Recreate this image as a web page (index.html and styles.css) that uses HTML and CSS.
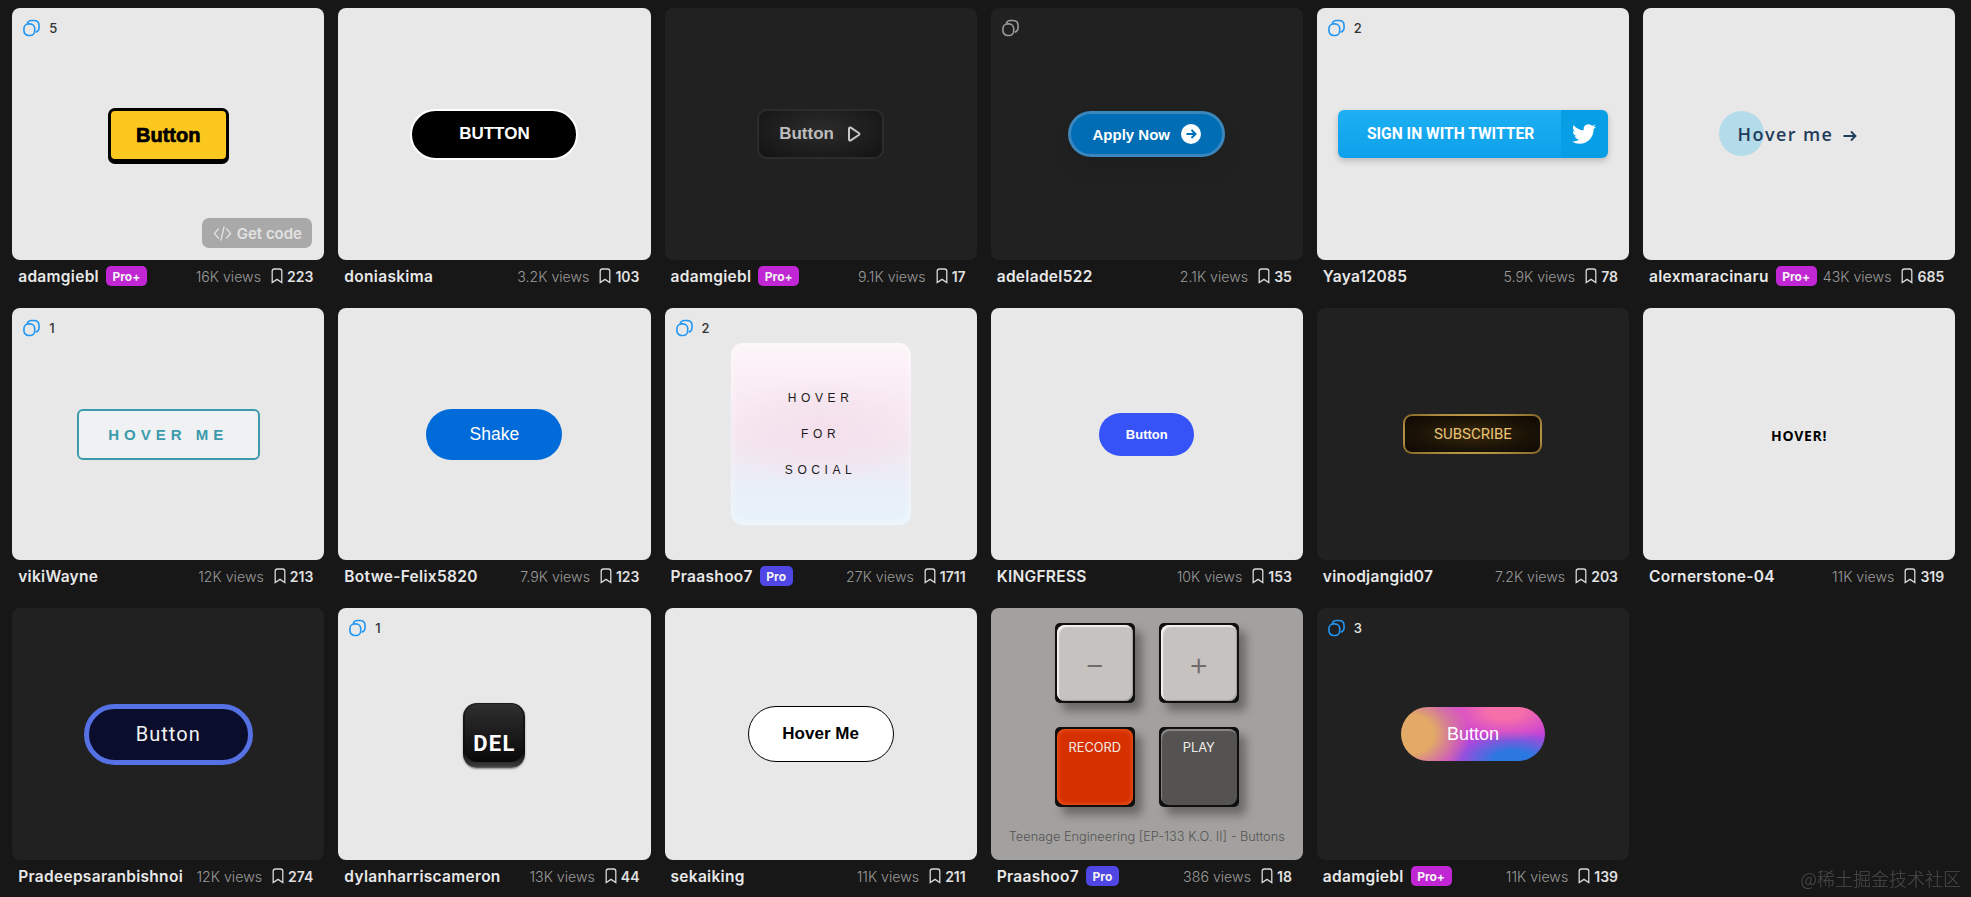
FILE: index.html
```html
<!DOCTYPE html>
<html lang="en">
  <head>
    <title>Buttons</title>
    <meta charset="UTF-8">
    <link rel="stylesheet" href="styles.css">
  </head>
  <body>
    <svg class="defs" aria-hidden="true">
      <symbol id="stack" viewBox="0 0 18 18">
        <rect x="1" y="4.6" width="11.4" height="12.4" rx="5" />
        <path d="M4.4 4.2C5 2.4 6.6 1 9 1h2.4C14.6 1 17 3 17 6.4v2.4c0 2.2-1.4 4-3.6 4.6" />
      </symbol>
      <symbol id="bookmark" viewBox="0 0 12 16">
        <path d="M1.2 14.6V3.2C1.2 1.9 2.1 1 3.4 1h5.2c1.3 0 2.2.9 2.2 2.2v11.4L6 11.4z" />
      </symbol>
    </svg>

    <main class="grid">
      <!-- row 1 -->
      <article class="item">
        <div class="thumb light">
          <div class="variants"><svg class="stack"><use href="#stack" /></svg><span>5</span></div>
          <button class="btn-yellow">Button</button>
          <div class="get-code">
            <svg viewBox="0 0 20 18"><path d="M6 3.5L1.5 9 6 14.5M14 3.5L18.5 9 14 14.5M11.8 1.5L8.2 16.5" /></svg>
            Get code
          </div>
        </div>
        <div class="meta">
          <span class="author">adamgiebl</span><span class="badge plus">Pro+</span>
          <span class="views">16K views</span><svg class="mark"><use href="#bookmark" /></svg><span class="saves">223</span>
        </div>
      </article>

      <article class="item">
        <div class="thumb light"><button class="btn-black">BUTTON</button></div>
        <div class="meta">
          <span class="author">doniaskima</span>
          <span class="views">3.2K views</span><svg class="mark"><use href="#bookmark" /></svg><span class="saves">103</span>
        </div>
      </article>

      <article class="item">
        <div class="thumb dark">
          <button class="btn-glow">Button
            <svg viewBox="0 0 16 16"><path d="M3 2.6c0-1 1-1.5 1.8-1l8 5.4c.8.5.8 1.5 0 2l-8 5.4c-.8.5-1.8 0-1.8-1z" /></svg>
          </button>
        </div>
        <div class="meta">
          <span class="author">adamgiebl</span><span class="badge plus">Pro+</span>
          <span class="views">9.1K views</span><svg class="mark"><use href="#bookmark" /></svg><span class="saves">17</span>
        </div>
      </article>

      <article class="item">
        <div class="thumb dark">
          <div class="variants"><svg class="stack grey"><use href="#stack" /></svg></div>
          <button class="btn-apply">Apply Now
            <svg viewBox="0 0 20 20"><circle cx="10" cy="10" r="10" fill="#fff" /><path d="M5.5 10h8.5M10.5 6l4 4-4 4" fill="none" stroke="#0070b8" stroke-width="2" /></svg>
          </button>
        </div>
        <div class="meta">
          <span class="author">adeladel522</span>
          <span class="views">2.1K views</span><svg class="mark"><use href="#bookmark" /></svg><span class="saves">35</span>
        </div>
      </article>

      <article class="item">
        <div class="thumb light">
          <div class="variants"><svg class="stack"><use href="#stack" /></svg><span>2</span></div>
          <button class="btn-twitter">
            <span class="twitter-label">SIGN IN WITH TWITTER</span>
            <span class="twitter-icon">
              <svg viewBox="0 0 24 24"><path d="M23.953 4.57a10 10 0 01-2.825.775 4.958 4.958 0 002.163-2.723c-.951.555-2.005.959-3.127 1.184a4.92 4.92 0 00-8.384 4.482C7.69 8.095 4.067 6.13 1.64 3.162a4.822 4.822 0 00-.666 2.475c0 1.71.87 3.213 2.188 4.096a4.904 4.904 0 01-2.228-.616v.06a4.923 4.923 0 003.946 4.827 4.996 4.996 0 01-2.212.085 4.936 4.936 0 004.604 3.417 9.867 9.867 0 01-6.102 2.105c-.39 0-.779-.023-1.17-.067a13.995 13.995 0 007.557 2.209c9.053 0 13.998-7.496 13.998-13.985 0-.21 0-.42-.015-.63A9.935 9.935 0 0024 4.59z" /></svg>
            </span>
          </button>
        </div>
        <div class="meta">
          <span class="author">Yaya12085</span>
          <span class="views">5.9K views</span><svg class="mark"><use href="#bookmark" /></svg><span class="saves">78</span>
        </div>
      </article>

      <article class="item">
        <div class="thumb light">
          <button class="btn-circle">Hover me
            <svg viewBox="0 0 14 12"><path d="M.5 6h12M8 1.5L12.5 6 8 10.5" /></svg>
          </button>
        </div>
        <div class="meta">
          <span class="author">alexmaracinaru</span><span class="badge plus">Pro+</span>
          <span class="views tight">43K views</span><svg class="mark"><use href="#bookmark" /></svg><span class="saves">685</span>
        </div>
      </article>

      <!-- row 2 -->
      <article class="item">
        <div class="thumb light">
          <div class="variants"><svg class="stack"><use href="#stack" /></svg><span>1</span></div>
          <button class="btn-outline">HOVER ME</button>
        </div>
        <div class="meta">
          <span class="author">vikiWayne</span>
          <span class="views">12K views</span><svg class="mark"><use href="#bookmark" /></svg><span class="saves">213</span>
        </div>
      </article>

      <article class="item">
        <div class="thumb light"><button class="btn-shake">Shake</button></div>
        <div class="meta">
          <span class="author">Botwe-Felix5820</span>
          <span class="views">7.9K views</span><svg class="mark"><use href="#bookmark" /></svg><span class="saves">123</span>
        </div>
      </article>

      <article class="item">
        <div class="thumb light">
          <div class="variants"><svg class="stack"><use href="#stack" /></svg><span>2</span></div>
          <div class="social-card">
            <span>HOVER</span>
            <span>FOR</span>
            <span>SOCIAL</span>
          </div>
        </div>
        <div class="meta">
          <span class="author">Praashoo7</span><span class="badge pro">Pro</span>
          <span class="views">27K views</span><svg class="mark"><use href="#bookmark" /></svg><span class="saves">1711</span>
        </div>
      </article>

      <article class="item">
        <div class="thumb light"><button class="btn-royal">Button</button></div>
        <div class="meta">
          <span class="author">KINGFRESS</span>
          <span class="views">10K views</span><svg class="mark"><use href="#bookmark" /></svg><span class="saves">153</span>
        </div>
      </article>

      <article class="item">
        <div class="thumb dark"><button class="btn-gold">SUBSCRIBE</button></div>
        <div class="meta">
          <span class="author">vinodjangid07</span>
          <span class="views">7.2K views</span><svg class="mark"><use href="#bookmark" /></svg><span class="saves">203</span>
        </div>
      </article>

      <article class="item">
        <div class="thumb light"><button class="btn-plain">HOVER!</button></div>
        <div class="meta">
          <span class="author">Cornerstone-04</span>
          <span class="views">11K views</span><svg class="mark"><use href="#bookmark" /></svg><span class="saves">319</span>
        </div>
      </article>

      <!-- row 3 -->
      <article class="item">
        <div class="thumb dark"><button class="btn-navy">Button</button></div>
        <div class="meta">
          <span class="author">Pradeepsaranbishnoi</span>
          <span class="views">12K views</span><svg class="mark"><use href="#bookmark" /></svg><span class="saves">274</span>
        </div>
      </article>

      <article class="item">
        <div class="thumb light">
          <div class="variants"><svg class="stack"><use href="#stack" /></svg><span>1</span></div>
          <button class="btn-del"><span>DEL</span></button>
        </div>
        <div class="meta">
          <span class="author">dylanharriscameron</span>
          <span class="views">13K views</span><svg class="mark"><use href="#bookmark" /></svg><span class="saves">44</span>
        </div>
      </article>

      <article class="item">
        <div class="thumb light"><button class="btn-white">Hover Me</button></div>
        <div class="meta">
          <span class="author">sekaiking</span>
          <span class="views">11K views</span><svg class="mark"><use href="#bookmark" /></svg><span class="saves">211</span>
        </div>
      </article>

      <article class="item">
        <div class="thumb grey-panel">
          <div class="keys">
            <div class="key"><div class="cap cap-light big">&minus;</div></div>
            <div class="key"><div class="cap cap-light big">+</div></div>
            <div class="key"><div class="cap cap-red">RECORD</div></div>
            <div class="key"><div class="cap cap-dark">PLAY</div></div>
          </div>
          <p class="keys-caption">Teenage Engineering [EP-133 K.O. II] - Buttons</p>
        </div>
        <div class="meta">
          <span class="author">Praashoo7</span><span class="badge pro">Pro</span>
          <span class="views">386 views</span><svg class="mark"><use href="#bookmark" /></svg><span class="saves">18</span>
        </div>
      </article>

      <article class="item">
        <div class="thumb dark">
          <div class="variants on-dark"><svg class="stack"><use href="#stack" /></svg><span>3</span></div>
          <button class="btn-mesh">Button</button>
        </div>
        <div class="meta">
          <span class="author">adamgiebl</span><span class="badge plus">Pro+</span>
          <span class="views">11K views</span><svg class="mark"><use href="#bookmark" /></svg><span class="saves">139</span>
        </div>
      </article>
    </main>

    <div class="watermark">@稀土掘金技术社区</div>
  </body>
</html>
```

FILE: styles.css
```css
body {
  margin: 0;
  background-color: #171717;
  color: #e8e8e8;
  font-family: 'Inter', sans-serif;
}

.defs {
  display: none;
}

.grid {
  display: grid;
  grid-template-columns: repeat(6, 1fr);
  column-gap: 14px;
  row-gap: 16px;
  padding: 8px 15.8px 0 12.2px;
}

.thumb {
  position: relative;
  height: 252px;
  border-radius: 8px;
  display: flex;
  align-items: center;
  justify-content: center;
}

.light {
  background-color: #e8e8e8;
}

.dark {
  background-color: #212121;
}

.grey-panel {
  background-color: #a3a19f;
  flex-direction: column;
  justify-content: flex-start;
}

button {
  border: none;
  padding: 0;
  cursor: pointer;
  font-family: 'Liberation Sans', sans-serif;
}

/* top left "variants" marker */
.variants {
  position: absolute;
  top: 11px;
  left: 11px;
  display: flex;
  align-items: center;
  gap: 9px;
  font-size: 13px;
  font-weight: 500;
  line-height: 18px;
  color: #333;
}

.on-dark {
  color: #e8e8e8;
}

.stack {
  width: 17px;
  height: 18px;
  fill: none;
  stroke: #2196f3;
  stroke-width: 1.7;
}

.stack.grey {
  stroke: #9a9a9a;
}

.get-code {
  position: absolute;
  right: 12px;
  bottom: 12px;
  width: 110px;
  height: 30px;
  box-sizing: border-box;
  display: flex;
  align-items: center;
  justify-content: center;
  gap: 5px;
  border-radius: 7px;
  background-color: #a9a9a9;
  color: #e2e2e2;
  font-size: 15px;
  font-weight: 600;
}

.get-code svg {
  width: 19px;
  height: 17px;
  fill: none;
  stroke: #e2e2e2;
  stroke-width: 1.4;
}

/* line under each thumbnail */
.meta {
  height: 32px;
  display: flex;
  align-items: center;
  padding: 0 11px 0 6px;
  font-size: 14px;
}

.author {
  font-weight: 600;
  font-size: 15.5px;
  letter-spacing: 0.3px;
  color: #e8e8e8;
  white-space: nowrap;
}

.badge {
  margin-left: 7px;
  height: 20px;
  padding: 0 6.5px;
  display: flex;
  align-items: center;
  border-radius: 5px;
  color: #f2f2f2;
  font-size: 12px;
  font-weight: 700;
}

.plus {
  background-color: #c026d3;
}

.pro {
  background-color: #4f46e5;
}

.views {
  margin-left: auto;
  font-weight: 300;
  font-size: 14.2px;
  color: #9a9a9a;
  white-space: nowrap;
}

.mark {
  width: 12px;
  height: 16px;
  margin: 0 4px 0 10px;
  flex: none;
  fill: none;
  stroke: #d8d8d8;
  stroke-width: 1.3;
}

.saves {
  font-weight: 600;
  font-size: 14px;
  color: #e0e0e0;
}

/* the buttons themselves */
.btn-yellow {
  width: 121px;
  height: 54px;
  margin-top: 2px;
  box-sizing: border-box;
  border: 3px solid #000;
  border-radius: 7px;
  box-shadow: 0 2px 0 #000;
  background-color: #fcc71f;
  color: #000;
  font-size: 20px;
  font-weight: 700;
  -webkit-text-stroke: 0.7px #000;
}

.btn-black {
  width: 168px;
  height: 51px;
  box-sizing: border-box;
  border: 2px solid #fff;
  border-radius: 26px;
  background-color: #000;
  color: #fff;
  font-size: 17px;
  font-weight: 700;
}

.btn-glow {
  width: 127px;
  height: 50px;
  box-sizing: border-box;
  display: flex;
  align-items: center;
  justify-content: center;
  gap: 12px;
  border: 2px solid #2c2c2c;
  border-radius: 10px;
  background: radial-gradient(ellipse at 50% 40%, #2c2c2c 0%, #1e1e1e 55%, #131313 100%);
  color: #bdbdbd;
  font-size: 17px;
  font-weight: 700;
}

.btn-glow svg {
  width: 16px;
  height: 16px;
  fill: none;
  stroke: #c8c8c8;
  stroke-width: 2;
}

.btn-apply {
  width: 157px;
  height: 46px;
  box-sizing: border-box;
  display: flex;
  align-items: center;
  justify-content: center;
  gap: 11px;
  border: 3px solid #3a87bd;
  border-radius: 23px;
  background-color: #006db5;
  box-shadow: 0 14px 22px rgba(0, 0, 0, 0.08);
  color: #fff;
  font-size: 15px;
  font-weight: 700;
}

.btn-apply svg {
  width: 20px;
  height: 20px;
}

.btn-twitter {
  width: 270px;
  height: 48px;
  display: flex;
  border-radius: 6px;
  overflow: hidden;
  box-shadow: 0 3px 6px rgba(0, 0, 0, 0.2);
  color: #fff;
}

.twitter-label {
  flex: 1;
  display: flex;
  align-items: center;
  padding-left: 29px;
  background: linear-gradient(to bottom, #1eb0f2, #0ea0ea);
  font-family: 'Roboto', sans-serif;
  font-size: 15.6px;
  font-weight: 700;
}

.twitter-icon {
  width: 47px;
  display: flex;
  align-items: center;
  justify-content: center;
  background-color: #089ee6;
}

.twitter-icon svg {
  width: 24px;
  height: 24px;
  fill: #fff;
}

.btn-circle {
  position: relative;
  isolation: isolate;
  width: 161px;
  height: 46px;
  display: flex;
  align-items: center;
  gap: 10px;
  padding-left: 19px;
  box-sizing: border-box;
  background: none;
  color: #1f3b5c;
  font-family: 'Open Sans', sans-serif;
  font-size: 18px;
  font-weight: 600;
  letter-spacing: 1.4px;
}

.btn-circle::before {
  content: '';
  position: absolute;
  z-index: -1;
  top: 0;
  left: 0;
  width: 45px;
  height: 45px;
  border-radius: 50%;
  background-color: #b3dbe9;
}

.btn-circle svg {
  width: 14px;
  height: 12px;
  margin-top: 3px;
  fill: none;
  stroke: #1f3b5c;
  stroke-width: 1.8;
}

.btn-outline {
  width: 183px;
  height: 51px;
  box-sizing: border-box;
  border: 2px solid #3b9bac;
  border-radius: 6px;
  background-color: #f0f1f2;
  color: #3b9bac;
  font-size: 15px;
  font-weight: 700;
  letter-spacing: 5px;
}

.btn-shake {
  width: 136px;
  height: 51px;
  border-radius: 26px;
  background-color: #016bd9;
  color: #fff;
  font-size: 17.5px;
}

.social-card {
  width: 180px;
  height: 182px;
  display: flex;
  flex-direction: column;
  align-items: center;
  justify-content: center;
  gap: 20px;
  border-radius: 12px;
  background:
    radial-gradient(ellipse 55% 30% at 50% 48%, #f3e0ec 10%, rgba(243, 224, 236, 0) 100%),
    linear-gradient(to bottom, #fdf5f9 0%, #f9e9f1 35%, #f4e6ef 55%, #e9eef8 78%, #e7f3fc 100%);
  box-shadow: inset 0 0 10px rgba(255, 255, 255, 0.6), 0 0 4px rgba(240, 240, 245, 0.7);
  color: #1c1c1c;
  font-family: 'Liberation Sans', sans-serif;
  font-size: 12px;
  line-height: 16px;
  letter-spacing: 4.6px;
}

.btn-royal {
  width: 95px;
  height: 43px;
  border-radius: 22px;
  background-color: #3653f8;
  color: #fff;
  font-size: 13px;
  font-weight: 700;
}

.btn-gold {
  width: 139px;
  height: 40px;
  box-sizing: border-box;
  border: 2px solid transparent;
  border-radius: 9px;
  background:
    radial-gradient(ellipse at center, #3a2a0c 0%, #1a1206 60%, #0e0a03 100%) padding-box,
    radial-gradient(ellipse at center, #f3cd6d 35%, #7d5e20 100%) border-box;
  color: #e9c477;
  font-family: 'Roboto', sans-serif;
  font-size: 15px;
}

.btn-plain {
  background: none;
  color: #000;
  font-family: 'Open Sans', sans-serif;
  font-size: 14px;
  font-weight: 700;
  letter-spacing: 0.7px;
  margin-top: 2px;
}

.btn-navy {
  width: 169px;
  height: 61px;
  box-sizing: border-box;
  border: 5px solid #5571e4;
  border-radius: 31px;
  background-color: #0a0d2b;
  color: #f2f2f2;
  font-family: 'Roboto', sans-serif;
  font-size: 20px;
  letter-spacing: 1px;
}

.btn-del {
  width: 62px;
  height: 65px;
  margin-top: 2px;
  padding: 1px 2px 6px;
  box-sizing: border-box;
  border-radius: 14px;
  background: linear-gradient(to bottom, #1a1a1a, #0d0d0d 75%, #3a3a3a 97%, #666);
  box-shadow: 0 1px 2px rgba(0, 0, 0, 0.4);
}

.btn-del span {
  display: flex;
  align-items: flex-end;
  justify-content: center;
  height: 100%;
  padding-bottom: 6px;
  box-sizing: border-box;
  border-radius: 12px;
  background: linear-gradient(to bottom, #2f2f2f, #1e1e1e 45%, #090909 100%);
  color: #fff;
  font-family: 'Roboto', sans-serif;
  font-size: 22px;
  font-weight: 700;
  letter-spacing: 1.2px;
}

.btn-white {
  width: 146px;
  height: 56px;
  box-sizing: border-box;
  border: 1px solid #000;
  border-radius: 28px;
  background-color: #fff;
  color: #000;
  font-size: 17px;
  font-weight: 700;
}

.keys {
  display: grid;
  grid-template-columns: 80px 80px;
  gap: 24px;
  margin-top: 15px;
}

.key {
  height: 80px;
  box-sizing: border-box;
  padding: 2px;
  border-radius: 5px;
  background-color: #0f0f0f;
  box-shadow: 7px 8px 10px rgba(0, 0, 0, 0.35);
  display: flex;
}

.cap {
  flex: 1;
  border-radius: 8px;
  display: flex;
  justify-content: center;
  font-family: 'Inter', sans-serif;
  font-size: 12.8px;
  padding-top: 11px;
  color: #f0ece8;
}

.cap-light {
  background-color: #c5c2bf;
  box-shadow: inset 2px 2px 1px #f2f0ee, inset -1px -1px 1px #a09d9a;
  color: #6f6c6a;
}

.big {
  align-items: center;
  padding-top: 0;
  font-size: 32px;
  font-weight: 300;
}

.cap-red {
  background-color: #d73000;
  box-shadow: inset 0 0 5px #f4662a;
}

.cap-dark {
  background-color: #545351;
  box-shadow: inset 1px 2px 1px #8a8886;
}

.keys-caption {
  margin: 22px 0 0;
  color: #545454;
  font-size: 12.8px;
  font-weight: 300;
  white-space: nowrap;
}

.btn-mesh {
  width: 144px;
  height: 54px;
  border-radius: 27px;
  background:
    radial-gradient(ellipse 42% 90% at 6% 50%, #e2aa66 40%, rgba(226, 170, 102, 0) 100%),
    radial-gradient(ellipse 45% 55% at 72% 8%, #f76fa8 25%, rgba(247, 111, 168, 0) 100%),
    radial-gradient(ellipse 45% 55% at 78% 98%, #2a78e0 30%, rgba(42, 120, 224, 0) 100%),
    #c43edb;
  color: #fff;
  font-size: 18px;
}

.watermark {
  position: fixed;
  right: 10px;
  bottom: 7px;
  color: rgba(255, 255, 255, 0.22);
  font-family: 'Noto Sans CJK SC', sans-serif;
  font-size: 18px;
  font-weight: 300;
  line-height: 24px;
}
```
